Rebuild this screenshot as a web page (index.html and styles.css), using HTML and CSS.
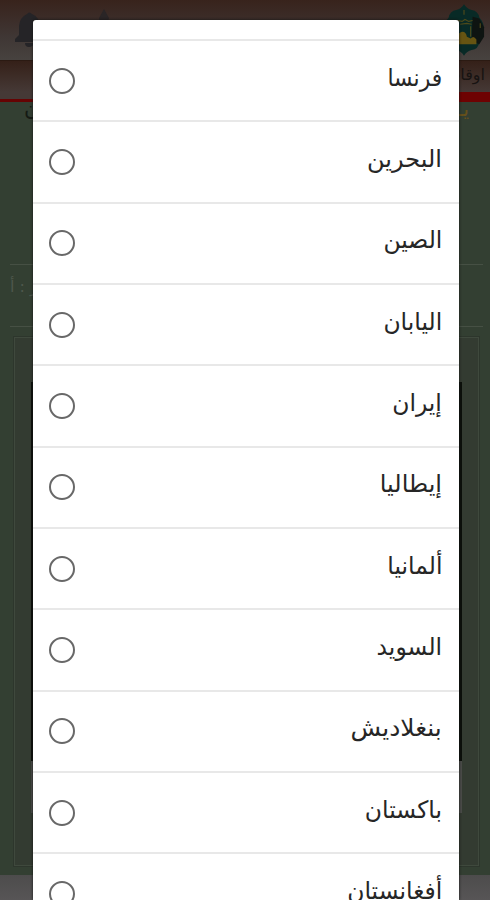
FILE: index.html
```
<!DOCTYPE html>
<html lang="ar" dir="rtl">
<head>
<meta charset="utf-8">
<title>اختيار الدولة</title>
<link rel="stylesheet" href="styles.css">
</head>
<body>
<div class="page">
  <header class="header">
    <svg class="emblem" viewBox="0 0 44 56" aria-hidden="true">
      <path d="M22 1q3 5 8 6 7 1 8 8 5 5 5 13t-5 13q-1 7-8 8-5 1-8 6-3-5-8-6-7-1-8-8-5-5-5-13t5-13q1-7 8-8 5-1 8-6z" fill="#082a26"/>
      <path d="M31 14l7 2 5 9v10l-5 8-8-4z" fill="#0e1411"/>
      <path d="M15 43V33q2-2 4-3 5-1 6 5l4 2q3-4 6 1v5z" fill="#665412"/>
      <path d="M15 18l5 1 3-2 4 2 4-1M18 22l7-1 5 1M22 7v5M16 25v8M39 21v5M29 24v11" fill="none" stroke="#4e4a1a" stroke-width="1.2"/>
    </svg>
    <svg class="drop" viewBox="0 0 14 20" aria-hidden="true"><path d="M7 0l5 9-2 8H3L2 9z"/></svg>
    <svg class="bell" viewBox="0 0 30 36" aria-hidden="true"><path d="M13 3q2-3 5 0 8 3 8 14v7l3 4v3H1v-3l4-4v-9q1-9 8-12M11 32h9q-1 4-5 4t-4-4"/></svg>
  </header>
  <nav class="nav">اوقات</nav>
  <div class="rule"></div>
  <div class="ticker"><b>يـ</b><span>ن</span></div>
  <div class="info"><span>أ : ر</span></div>
  <div class="frame"><div class="media"></div><div class="caption"></div></div>
  <footer class="footer"></footer>
</div>
<div class="dialog" role="listbox">
  <div class="spacer"></div>
  <div class="row"><span class="name france">فرنسا</span><i class="radio"></i></div>
  <div class="row"><span class="name wide">البحرين</span><i class="radio"></i></div>
  <div class="row"><span class="name">الصين</span><i class="radio"></i></div>
  <div class="row"><span class="name">اليابان</span><i class="radio"></i></div>
  <div class="row"><span class="name">إيران</span><i class="radio"></i></div>
  <div class="row"><span class="name wide">إيطاليا</span><i class="radio"></i></div>
  <div class="row"><span class="name">ألمانيا</span><i class="radio"></i></div>
  <div class="row"><span class="name">السويد</span><i class="radio"></i></div>
  <div class="row"><span class="name bangladesh">بنغلاديش</span><i class="radio"></i></div>
  <div class="row"><span class="name">باكستان</span><i class="radio"></i></div>
  <div class="row"><span class="name">أفغانستان</span><i class="radio"></i></div>
</div>
</body>
</html>
```
FILE: styles.css
```
* { box-sizing: border-box; }
body { position: relative; margin: 0; height: 900px; overflow: hidden; font-family: "DejaVu Sans", sans-serif; }
.page { height: 900px; display: flex; flex-direction: column; background: #333f32; }
.header { height: 61px; display: flex; align-items: flex-start; padding: 2px 5px 0 14px; background: linear-gradient(#38231c, #3f3634 60%, #47423f); border-bottom: 1px solid #2b1a12; }
.emblem { width: 42px; height: 56px; }
.drop { width: 14px; height: 20px; margin: 7px auto 0 53px; fill: #2a2526; }
.bell { width: 30px; height: 36px; margin-top: 9px; fill: #252427; }
.nav { height: 31px; padding: 3px 5px; background: linear-gradient(#352018, #453936); color: #171312; font-size: 16px; line-height: 22px; }
.rule { height: 10px; background: linear-gradient(#453936 0 7px, #650303 7px) left / 440px 100% no-repeat, #6e0202; }
.ticker { height: 162px; display: flex; justify-content: space-between; padding: 0 21px 0 24px; line-height: 14px; font-size: 21px; color: #151a14; }
.ticker b { color: #66501b; font-weight: normal; }
.info { height: 63px; margin: 0 7px 0 10px; border-top: 1px solid #465044; border-bottom: 1px solid #465044; display: flex; justify-content: flex-end; padding-top: 12px; font-size: 16px; color: #4e574c; }
.info span { direction: ltr; unicode-bidi: bidi-override; }
.frame { height: 530px; margin: 10px 11px 0 14px; padding: 44px 16px 0; border: 1px solid #3f493d; outline: 1px solid #2d362c; background: #333b31; }
.media { height: 379px; background: #0c100b; }
.caption { height: 52px; background: #4b4c49; }
.footer { margin-top: 9px; height: 25px; background: linear-gradient(#4d4c4c, #575556); }
.dialog { position: absolute; left: 33px; top: 20px; width: 426px; height: 880px; overflow: hidden; background: #fff; border-radius: 3px 3px 0 0; box-shadow: 0 0 3px #111; }
.spacer { height: 19px; }
.row { height: 81.35px; display: flex; justify-content: space-between; align-items: center; padding: 0 17px 0 16px; border-top: 2px solid #e8e8e8; }
.name { color: #262626; font-size: 24px; line-height: 40px; transform-origin: right; transform: translateY(-3px) scaleX(.977); }
.france { transform: translateY(-3px) scaleX(.91); }
.wide { transform: translateY(-3px); }
.bangladesh { transform: translateY(-3px) scaleX(1.04); }
.radio { width: 26px; height: 26px; border: 2px solid #686868; border-radius: 50%; }
```
